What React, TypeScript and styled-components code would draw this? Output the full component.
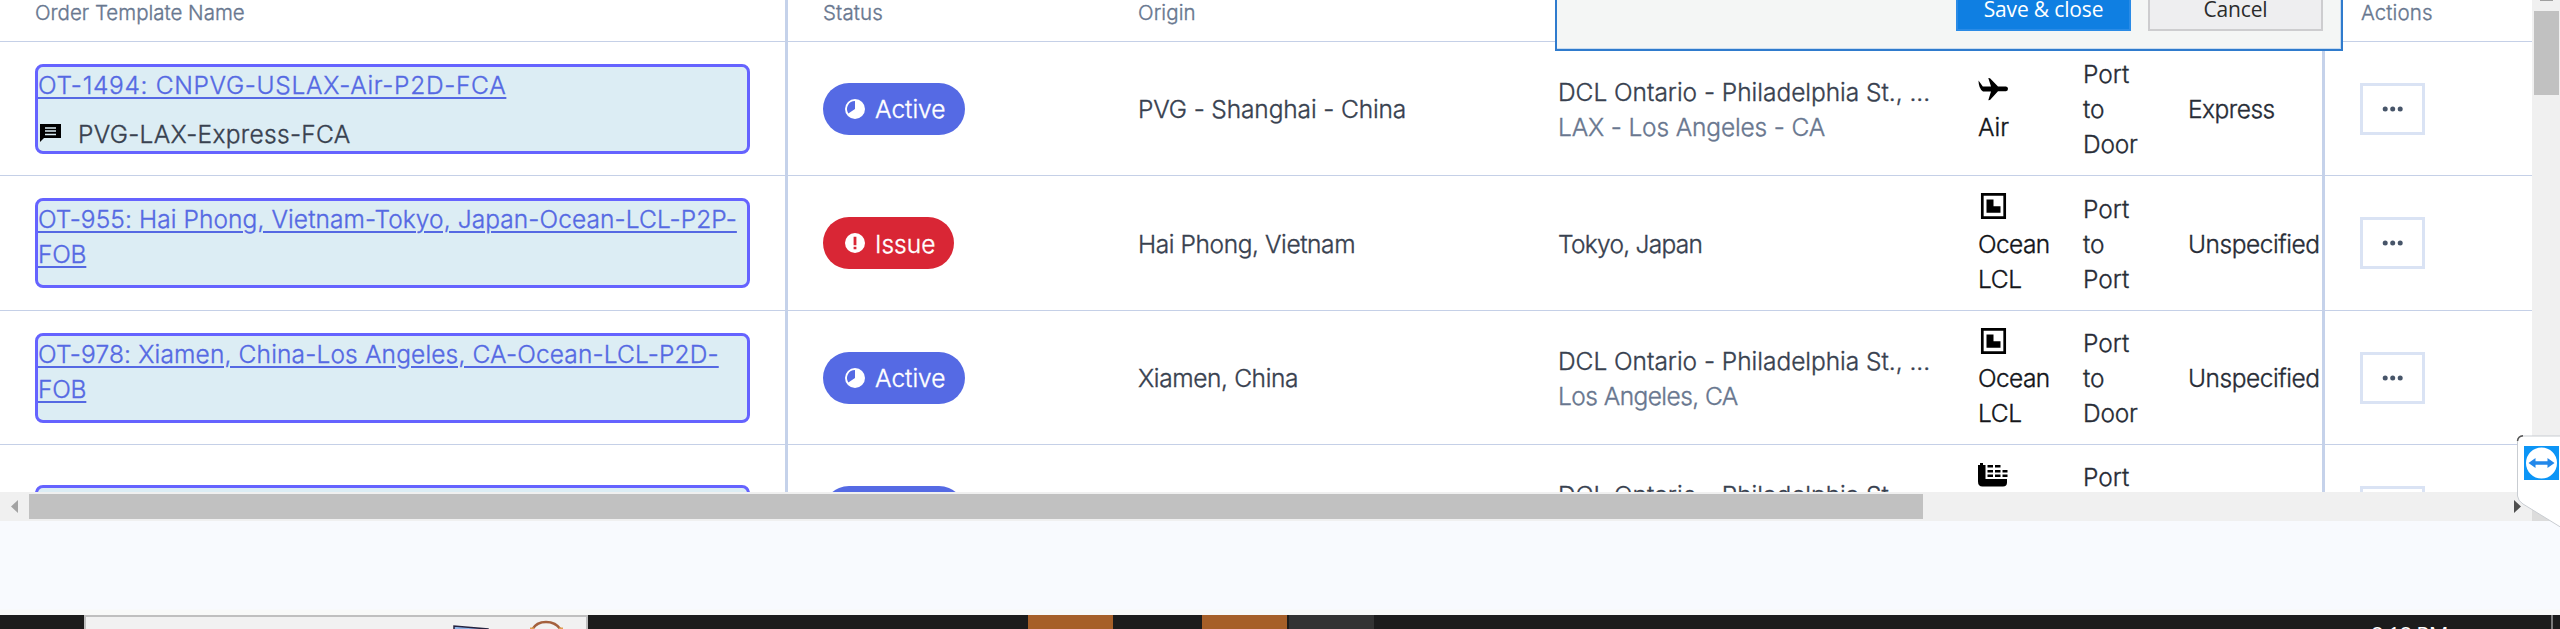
import React from "react";
import styled, { createGlobalStyle, css } from "styled-components";

const Global = createGlobalStyle`
  * { box-sizing: border-box; }
  body { margin: 0; background: #f8fafe; overflow: hidden; }
`;

const Page = styled.div`
  position: relative;
  width: 2560px;
  height: 629px;
  overflow: hidden;
  display: flex;
  flex-direction: column;
  font-family: Inter, "Liberation Sans", sans-serif;
  font-size: 24.5px;
  font-weight: 300;
  line-height: 35px;
  color: #38414f;
`;

const Viewport = styled.div`
  display: flex;
  height: 492px;
  flex: none;
`;

const Grid = styled.div`
  width: 2532px;
  height: 492px;
  overflow: hidden;
  background: #fff;
  -webkit-text-stroke: 0.35px currentColor;
`;

const Row = styled.div<{ $h: number }>`
  display: grid;
  grid-template-columns: 788px 317px 418px 422px 105px 106px 169px 207px;
  height: ${(p) => p.$h}px;
`;

const Cell = styled.div<{ $pad?: number; $divider?: boolean; $tone?: string; $drop?: number }>`
  display: flex;
  flex-direction: column;
  align-items: flex-start;
  justify-content: center;
  border-bottom: 1px solid #c5d0e7;
  padding-top: ${(p) => p.$drop ?? 0}px;
  padding-left: ${(p) => p.$pad ?? 35}px;
  color: ${(p) => p.$tone ?? "inherit"};
  white-space: nowrap;
  ${(p) =>
    p.$divider &&
    css`
      border-right: 3px solid #c5d2ea;
    `}
`;

const HeadCell = styled(Cell)`
  justify-content: flex-start;
  font-size: 20.5px;
  line-height: 24px;
  color: #68778f;
`;

const HeadText = styled.span<{ $ls?: number }>`
  margin-top: 1px;
  letter-spacing: ${(p) => p.$ls ?? 0}px;
`;

const Line = styled.span<{ $ls?: number; $muted?: boolean }>`
  display: block;
  letter-spacing: ${(p) => p.$ls ?? 0}px;
  ${(p) => p.$muted && "color: #69778f;"}
`;

const NameBox = styled.div<{ $h: number }>`
  width: 715px;
  height: ${(p) => p.$h}px;
  border: 3px solid #6563ff;
  border-radius: 8px;
  background: #dcedf4;
`;

const Link = styled.a<{ $ls?: number }>`
  display: block;
  height: 35px;
  padding-top: 1px;
  color: #5569e3;
  text-decoration: underline;
  text-decoration-thickness: 2px;
  text-underline-offset: 3px;
  letter-spacing: ${(p) => p.$ls ?? 0}px;
`;

const Note = styled.div`
  display: flex;
  align-items: center;
  gap: 17px;
  margin-top: 15px;
  padding-left: 2px;
`;

const Pill = styled.span<{ $bg: string; $w: number }>`
  display: flex;
  align-items: center;
  gap: 10px;
  width: ${(p) => p.$w}px;
  height: 52px;
  padding-left: 22px;
  border-radius: 26px;
  background: ${(p) => p.$bg};
  color: #fff;
`;

const PillText = styled.span`
  padding-top: 2px;
`;

const IconLine = styled.span`
  display: flex;
  align-items: center;
  height: 35px;
  padding-bottom: 6px;
`;

const MoreButton = styled.button`
  display: flex;
  align-items: center;
  justify-content: center;
  width: 65px;
  height: 52px;
  padding: 0;
  border: 3px solid #dae3f4;
  background: #fff;
`;

const VTrack = styled.div`
  width: 28px;
  padding: 0 1px 0 2px;
  background: #f0f0f0;
`;

const VArrow = styled.div`
  width: 13px;
  height: 1px;
  margin: 0 0 10px 6px;
  background: #a0a0a0;
`;

const VThumb = styled.div`
  height: 84px;
  background: #c1c1c1;
`;

const HTrack = styled.div`
  display: flex;
  align-items: center;
  height: 29px;
  flex: none;
  background: linear-gradient(to right, #f0f0f0 2532px, #dcdcdc 2532px);
`;

const HArrow = styled.svg`
  width: 29px;
  height: 29px;
  flex: none;
`;

const HThumb = styled.div`
  width: 1894px;
  height: 25px;
  margin-right: 580px;
  background: #c1c1c1;
`;

const Below = styled.div`
  height: 94px;
  flex: none;
  background: linear-gradient(to bottom, #f8fafe 88px, #f8f9f8 89px);
`;

const Taskbar = styled.div`
  display: flex;
  height: 14px;
  flex: none;
  overflow: hidden;
  background: #1c1c1c;
`;

const Preview = styled.div`
  width: 504px;
  height: 40px;
  margin-left: 84px;
  border: 2px solid #bfbfbf;
  background: #f1f1f1;
`;

const PreviewArt = styled.svg`
  display: block;
  width: 500px;
  height: 14px;
`;

const Task = styled.div<{ $bg: string; $gap: number }>`
  width: 85px;
  margin-left: ${(p) => p.$gap}px;
  background: ${(p) => p.$bg};
`;

const Clock = styled.div`
  width: 180px;
  margin-left: 997px;
  padding-top: 6px;
  font: 22px/26px "Open Sans", "Noto Sans", sans-serif;
  letter-spacing: -0.8px;
  color: #fff;
`;

const DeskEdge = styled.div`
  width: 2px;
  background: #7a7a7a;
`;

const Dialog = styled.div`
  position: absolute;
  left: 1555px;
  top: -20px;
  width: 788px;
  height: 71px;
  display: flex;
  justify-content: flex-end;
  align-items: flex-start;
  gap: 17px;
  padding-right: 18px;
  border: 2px solid #2f7bcd;
  background: #f4f6f5;
  box-shadow: inset -1px -1px 0 #c9dcf0;
`;

const DialogButton = styled.button<{ $primary?: boolean }>`
  width: 175px;
  height: 49px;
  padding: 5px 0 0;
  font: 21px/26px "Open Sans", "Noto Sans", sans-serif;
  letter-spacing: -0.15px;
  border: 2px solid ${(p) => (p.$primary ? "#2a8be6" : "#cdcdcf")};
  background: ${(p) => (p.$primary ? "#0f7fe2" : "#eeeef0")};
  color: ${(p) => (p.$primary ? "#fff" : "#2b2b2b")};
`;

const SideTab = styled.svg`
  position: absolute;
  left: 2514px;
  top: 432px;
  width: 46px;
  height: 100px;
`;

const NoteGlyph = styled.svg`
  flex: none;
  margin-top: -2px;
`;

const NoteIcon = () => (
  <NoteGlyph width="21" height="18" viewBox="0 0 21 18">
    <path d="M0 0h21v14H4L0 18Z" fill="#000" />
    <path d="M5 4h11M5 7h11M5 10.5h11" stroke="#dcedf4" strokeWidth="1.5" />
  </NoteGlyph>
);

const ActiveIcon = () => (
  <svg width="20" height="20" viewBox="0 0 20 20">
    <circle cx="10" cy="10" r="10" fill="#fff" />
    <path d="M10 10V2A8 8 0 0 0 3.3 14.4Z" fill="#556ae4" />
  </svg>
);

const IssueIcon = () => (
  <svg width="20" height="20" viewBox="0 0 20 20">
    <circle cx="10" cy="10" r="10" fill="#fff" />
    <path d="M8.6 3.8h2.8v8.4H8.6zM8.6 13.7h2.8v2.6H8.6z" fill="#d92635" />
  </svg>
);

const AirIcon = () => (
  <svg width="30" height="24" viewBox="0 0 30 24">
    <path
      d="M.5 3.5 4.8 9.6H13L10.3 1 12 1.3 20 9.5h8q2 .2 2 2.3t-2 2.4h-8L12 23l-1.7.2L13 14.5H5Q.6 11.5.5 3.5Z"
      fill="#000"
    />
  </svg>
);

const LclIcon = () => (
  <svg width="30" height="26" viewBox="0 0 30 26">
    <path d="M4.3 1.3h22.4v23.4H4.3z" fill="none" stroke="#000" strokeWidth="2.7" />
    <path d="M8.5 6.5h7v6.7h7v6.6h-14z" fill="#000" />
  </svg>
);

const ShipIcon = () => (
  <svg width="30" height="24" viewBox="0 0 30 24">
    <path d="M0 2h2V0h3v2h2.5v14H29v3.5Q29 23.5 25 23.5H4.5Q0 23.5 0 18.5Z" fill="#000" />
    <path
      d="M9.5 3.2h5.5m2 0h5.5M9.5 8.2h5.5m2 0h5.5m2 0h5M9.5 12.7h5.5m2 0h5.5m2 0h5"
      stroke="#000"
      strokeWidth="2.6"
    />
  </svg>
);

const Dots = () => (
  <svg width="22" height="6" viewBox="0 0 22 6">
    {[3.2, 10.7, 18.2].map((x) => (
      <circle key={x} cx={x} cy="3" r="2.5" fill="#475569" />
    ))}
  </svg>
);

type T = [text: string, letterSpacing: number];
interface RowData {
  h: number;
  name: T[];
  boxH: number;
  note?: T;
  status: "Active" | "Issue";
  origin: T;
  dest: T[];
  icon: React.ReactNode;
  mode: T[];
  route: T[];
  service: T;
}

const rows: RowData[] = [
  {
    h: 134,
    boxH: 90,
    name: [["OT-1494: CNPVG-USLAX-Air-P2D-FCA", 0.68]],
    note: ["PVG-LAX-Express-FCA", 0.3],
    status: "Active",
    origin: ["PVG - Shanghai - China", -0.13],
    dest: [["DCL Ontario - Philadelphia St., ...", -0.03], ["LAX - Los Angeles - CA", -0.16]],
    icon: <AirIcon />,
    mode: [["Air", 0]],
    route: [["Port", 0], ["to", 0], ["Door", -0.2]],
    service: ["Express", -0.5],
  },
  {
    h: 135,
    boxH: 90,
    name: [["OT-955: Hai Phong, Vietnam-Tokyo, Japan-Ocean-LCL-P2P-", 0.09], ["FOB", -0.2]],
    status: "Issue",
    origin: ["Hai Phong, Vietnam", -0.41],
    dest: [["Tokyo, Japan", -0.72]],
    icon: <LclIcon />,
    mode: [["Ocean", -0.6], ["LCL", -0.3]],
    route: [["Port", 0], ["to", 0], ["Port", 0]],
    service: ["Unspecified", -0.45],
  },
  {
    h: 134,
    boxH: 90,
    name: [["OT-978: Xiamen, China-Los Angeles, CA-Ocean-LCL-P2D-", 0.15], ["FOB", -0.2]],
    status: "Active",
    origin: ["Xiamen, China", -0.38],
    dest: [["DCL Ontario - Philadelphia St., ...", -0.03], ["Los Angeles, CA", -0.55]],
    icon: <LclIcon />,
    mode: [["Ocean", -0.6], ["LCL", -0.3]],
    route: [["Port", 0], ["to", 0], ["Door", -0.2]],
    service: ["Unspecified", -0.45],
  },
  {
    h: 134,
    boxH: 54,
    name: [],
    status: "Active",
    origin: ["", 0],
    dest: [["DCL Ontario - Philadelphia St., ...", -0.03], ["", 0]],
    icon: <ShipIcon />,
    mode: [["", 0], ["", 0]],
    route: [["Port", 0], ["", 0], ["", 0]],
    service: ["", 0],
  },
];

const Lines = ({ items, mutedFrom = 9 }: { items: T[]; mutedFrom?: number }) => (
  <>
    {items.map(([text, ls], i) => (
      <Line key={i} $ls={ls} $muted={i >= mutedFrom}>
        {text || "\u00a0"}
      </Line>
    ))}
  </>
);

export default function App() {
  return (
    <Page>
      <Global />
      <Viewport>
        <Grid>
          <Row $h={42}>
            <HeadCell $divider><HeadText>Order Template Name</HeadText></HeadCell>
            <HeadCell><HeadText $ls={0.1}>Status</HeadText></HeadCell>
            <HeadCell $pad={33}><HeadText $ls={0.1}>Origin</HeadText></HeadCell>
            <HeadCell />
            <HeadCell />
            <HeadCell />
            <HeadCell $divider />
            <HeadCell $pad={36}><HeadText $ls={0.1}>Actions</HeadText></HeadCell>
          </Row>
          {rows.map((r, i) => (
            <Row key={i} $h={r.h}>
              <Cell $divider>
                <NameBox $h={r.boxH}>
                  {r.name.map(([t, ls]) => (
                    <Link key={t} $ls={ls}>{t}</Link>
                  ))}
                  {r.note && (
                    <Note>
                      <NoteIcon />
                      <Line $ls={r.note[1]}>{r.note[0]}</Line>
                    </Note>
                  )}
                </NameBox>
              </Cell>
              <Cell>
                <Pill
                  $bg={r.status === "Active" ? "#556ae4" : "#d92635"}
                  $w={r.status === "Active" ? 142 : 131}
                >
                  {r.status === "Active" ? <ActiveIcon /> : <IssueIcon />}
                  <PillText>{r.status}</PillText>
                </Pill>
              </Cell>
              <Cell $pad={33} $drop={2}><Lines items={[r.origin]} /></Cell>
              <Cell $pad={35} $drop={2}><Lines items={r.dest} mutedFrom={1} /></Cell>
              <Cell $pad={33} $drop={2} $tone="#14161a">
                <IconLine>{r.icon}</IconLine>
                <Lines items={r.mode} />
              </Cell>
              <Cell $pad={33} $drop={2} $tone="#272c36"><Lines items={r.route} /></Cell>
              <Cell $pad={32} $drop={2} $divider $tone="#272c36"><Lines items={[r.service]} /></Cell>
              <Cell><MoreButton aria-label="More actions"><Dots /></MoreButton></Cell>
            </Row>
          ))}
        </Grid>
        <VTrack>
          <VArrow />
          <VThumb />
        </VTrack>
      </Viewport>
      <HTrack>
        <HArrow viewBox="0 0 29 29"><path d="M18 8v13L11 14.5Z" fill="#a3a3a3" /></HArrow>
        <HThumb />
        <HArrow viewBox="0 0 29 29"><path d="M11 8v13l7-6.5Z" fill="#4f4f4f" /></HArrow>
      </HTrack>
      <Below />
      <Taskbar>
        <Preview>
          <PreviewArt viewBox="0 0 500 14">
            <path d="M368 16V9l34 3v4Z" fill="#8fb4e8" stroke="#25233f" strokeWidth="1.5" />
            <path d="M446 13Q450 5 460 5T475 13" fill="none" stroke="#a4603d" strokeWidth="2.6" />
            <path d="M444 12h4m25 0h4" stroke="#e0a050" strokeWidth="3" />
          </PreviewArt>
        </Preview>
        <Task $bg="#a65f28" $gap={440} />
        <Task $bg="#a65f28" $gap={89} />
        <Task $bg="#333333" $gap={2} />
        <Clock>8:18 PM</Clock>
        <DeskEdge />
      </Taskbar>
      <Dialog>
        <DialogButton $primary>Save &amp; close</DialogButton>
        <DialogButton>Cancel</DialogButton>
      </Dialog>
      <SideTab viewBox="0 0 46 100">
        <path d="M48 4H9Q3.5 4 3.5 10V64Q4 69 9 72L48 96Z" fill="#fff" stroke="#c9cdd2" />
        <path d="M3.5 9Q4 4 9 3.7" fill="none" stroke="#555" strokeWidth="1.5" />
        <path d="M10 14h35v34H10z" fill="#0c95f6" />
        <circle cx="27.5" cy="31" r="15.5" fill="#fff" />
        <path d="M14.5 31l7-5v3.2h12V26l7 5-7 5v-3.2h-12V36Z" fill="#2388ea" />
      </SideTab>
    </Page>
  );
}
